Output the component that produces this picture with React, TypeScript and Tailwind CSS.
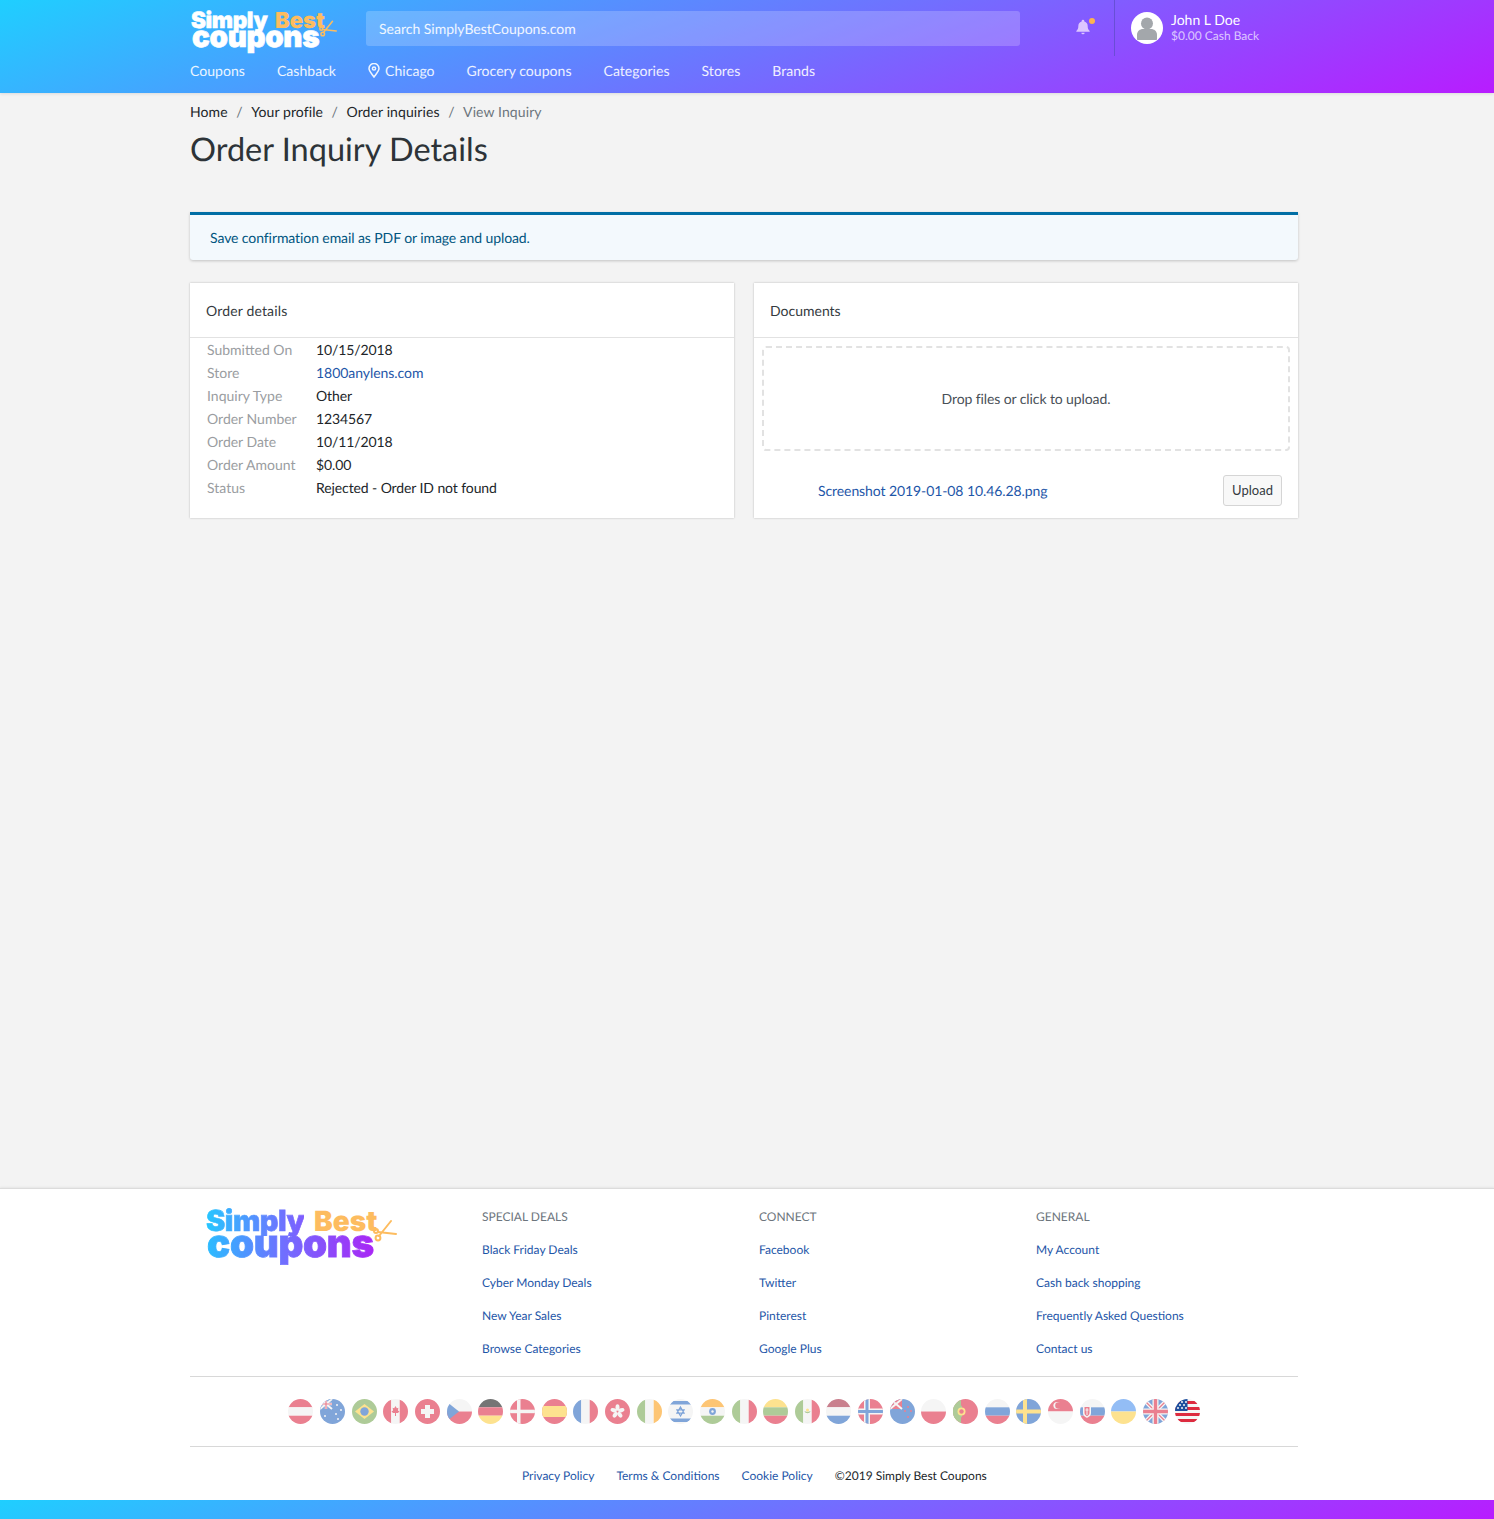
import React from "react";

const R = "#ea8090", W = "#f5f5f5", B = "#80a5d9", G = "#aecb98", Y = "#fde28f", O = "#fdc574", D = "#757575";
const r = (x: number, y: number, w: number, h: number, f: string, k?: number) => <rect key={k ?? `${x}${y}${w}${h}${f}`} x={x} y={y} width={w} height={h} fill={f} />;
const h3 = (a: string, b: string, c: string) => <>{r(0, 0, 25, 8.3, a)}{r(0, 8.3, 25, 8.4, b)}{r(0, 16.7, 25, 8.3, c)}</>;
const v3 = (a: string, b: string, c: string) => <>{r(0, 0, 8.3, 25, a)}{r(8.3, 0, 8.4, 25, b)}{r(16.7, 0, 8.3, 25, c)}</>;
const stars = (pts: number[][], f = W) => pts.map(([x, y], i) => <circle key={i} cx={x} cy={y} r="1" fill={f} />);
const ukCorner = <>{r(0, 0, 12, 10, B)}<path d="M0 0L12 10M12 0L0 10" stroke={W} strokeWidth="2" /><path d="M6 0V10M0 5H12" stroke={W} strokeWidth="2.4" /><path d="M6 0V10M0 5H12" stroke={R} strokeWidth="1.2" /></>;

const flags: React.ReactNode[] = [
  h3(R, W, R),
  <>{r(0, 0, 25, 25, B)}{ukCorner}{stars([[5, 17], [17, 6], [21, 11], [16, 15], [18, 20]])}</>,
  <>{r(0, 0, 25, 25, G)}<path d="M12.5 5L22 12.5L12.5 20L3 12.5Z" fill={Y} /><circle cx="12.5" cy="12.5" r="4.2" fill={B} /></>,
  <>{v3(R, W, R)}<path d="M12.5 7l1.3 2.3 1.6-.5-.5 3 1.6.2-1.4 2-2.1.1V17h-1v-2.9l-2.1-.1-1.4-2 1.6-.2-.5-3 1.6.5z" fill={R} /></>,
  <>{r(0, 0, 25, 25, R)}{r(10, 6, 5, 13, W)}{r(6, 10, 13, 5, W)}</>,
  <>{r(0, 0, 25, 12.5, W)}{r(0, 12.5, 25, 12.5, R)}<path d="M0 3L12 12.5L0 22Z" fill={B} /></>,
  h3(D, R, Y),
  <>{r(0, 0, 25, 25, R)}{r(7, 0, 3.5, 25, W)}{r(0, 10.7, 25, 3.5, W)}</>,
  <>{r(0, 0, 25, 25, R)}{r(0, 7, 25, 11, Y)}</>,
  v3(B, W, R),
  <>{r(0, 0, 25, 25, R)}<g fill={W}><ellipse cx="12.5" cy="8.5" rx="2" ry="3.2" /><ellipse cx="12.5" cy="8.5" rx="2" ry="3.2" transform="rotate(72 12.5 12.5)" /><ellipse cx="12.5" cy="8.5" rx="2" ry="3.2" transform="rotate(144 12.5 12.5)" /><ellipse cx="12.5" cy="8.5" rx="2" ry="3.2" transform="rotate(216 12.5 12.5)" /><ellipse cx="12.5" cy="8.5" rx="2" ry="3.2" transform="rotate(288 12.5 12.5)" /></g></>,
  v3(G, W, O),
  <>{r(0, 0, 25, 25, W)}{r(0, 2, 25, 3.5, B)}{r(0, 19.5, 25, 3.5, B)}<path d="M12.5 8l3.6 6.2H8.900zM12.5 17l-3.600-6.200h7.200z" fill="none" stroke={B} strokeWidth="1.200" /></>,
  <>{h3(O, W, G)}<circle cx="12.5" cy="12.5" r="3.400" fill={B} /><circle cx="12.5" cy="12.5" r="1.200" fill={W} /></>,
  v3(G, W, R),
  h3(Y, G, R),
  <>{v3(G, W, R)}<path d="M9.500 12c.5 3 5.500 3 6 0-1 1-5 1-6 0z" fill={G} /><circle cx="12.500" cy="11" r="1.500" fill={Y} /></>,
  h3("#c9808e", W, B),
  <>{r(0, 0, 25, 25, R)}{r(6, 0, 6, 25, W)}{r(0, 9.500, 25, 6, W)}{r(7.500, 0, 3, 25, B)}{r(0, 11, 25, 3, B)}</>,
  <>{r(0, 0, 25, 25, B)}{r(0, 0, 12, 10, R)}<path d="M0 0L12 10M12 0L0 10" stroke={W} strokeWidth="2" />{stars([[18, 8], [21, 12], [15, 12], [18, 18]], R)}</>,
  <>{r(0, 0, 25, 12.500, W)}{r(0, 12.500, 25, 12.500, R)}</>,
  <>{r(0, 0, 25, 25, R)}<path d="M0 3.500L9 7V18L0 21.500Z" fill={G} />{r(0, 0, 8, 25, G)}<circle cx="8.500" cy="12.500" r="4" fill={Y} /><circle cx="8.500" cy="12.500" r="2.200" fill={R} /></>,
  h3(W, B, R),
  <>{r(0, 0, 25, 25, B)}{r(7, 0, 4, 25, Y)}{r(0, 10.500, 25, 4, Y)}</>,
  <>{r(0, 0, 25, 12.500, R)}{r(0, 12.500, 25, 12.500, W)}<circle cx="9" cy="6.500" r="3.600" fill={W} /><circle cx="10.500" cy="6.500" r="3.300" fill={R} /></>,
  <>{h3(W, B, R)}<path d="M3 6h8v8c0 3-2.500 4-4 5-1.500-1-4-2-4-5z" fill={W} /><path d="M4.500 8h5v6c0 2-1.500 2.500-2.500 3.200-1-.7-2.500-1.200-2.500-3.200z" fill={R} /><path d="M7 9v7M5.500 11h3" stroke={W} strokeWidth="1" /></>,
  <>{r(0, 0, 25, 12.500, "#93bdf5")}{r(0, 12.500, 25, 12.500, Y)}</>,
  <>{r(0, 0, 25, 25, B)}<path d="M0 0L25 25M25 0L0 25" stroke={W} strokeWidth="4" /><path d="M0 0L25 25M25 0L0 25" stroke={R} strokeWidth="1.300" /><path d="M12.500 0V25M0 12.500H25" stroke={W} strokeWidth="6" /><path d="M12.500 0V25M0 12.500H25" stroke={R} strokeWidth="3.400" /></>,
  <>{r(0, 0, 25, 25, W)}{[2, 8, 14, 20].map((y) => r(0, y, 25, 3, "#dd2b3f", y))}{r(0, 0, 12.500, 12, "#1d4f9e")}{stars([[3, 3], [7, 3], [11, 3], [5, 6], [9, 6], [3, 9], [7, 9], [11, 9]])}</>,
];

function Logo({ footer }: { footer?: boolean }) {
  return (
    <div className={footer ? "relative w-[192px] h-[60px] font-['Inter',sans-serif] font-black select-none" : "relative w-[148px] h-[46px] font-['Inter',sans-serif] font-black select-none"}>
      {footer ? (
        <>
          <span className="absolute left-0 top-[1px] text-[29px] leading-[30px] tracking-[-0.5px] bg-[linear-gradient(90deg,#26c6ff,#5e86ff_60%,#7f5cff)] bg-clip-text text-transparent [-webkit-text-stroke:0.6px_transparent]">Simply</span>
          <span className="absolute left-[108px] top-[1px] text-[28px] leading-[30px] text-[#fdbc5f]">Best</span>
          <span className="absolute left-[1px] top-[18px] text-[38.500px] leading-[42px] tracking-[-0.3px] bg-[linear-gradient(90deg,#2bbcff,#6f70ff_45%,#a926f5)] bg-clip-text text-transparent [-webkit-text-stroke:0.8px_transparent]">coupons</span>
          <svg className="absolute left-[167px] top-[13px]" width="24" height="24" viewBox="0 0 24 24" fill="none" stroke="#fdbc5f" strokeWidth="2"><circle cx="5" cy="20" r="2.400" /><circle cx="3" cy="13" r="2" /><path d="M6 18L18 3M5 14L23 16" strokeLinecap="round" /></svg>
        </>
      ) : (
        <>
          <span className="absolute left-0 top-[1px] text-[22.500px] leading-[24px] tracking-[-0.4px] text-white [-webkit-text-stroke:0.5px_white]">Simply</span>
          <span className="absolute left-[84px] top-[1px] text-[22px] leading-[24px] text-[#fdbc5f]">Best</span>
          <span className="absolute left-[1px] top-[13px] text-[29.500px] leading-[32px] tracking-[-0.3px] text-white [-webkit-text-stroke:0.7px_white]">coupons</span>
          <svg className="absolute left-[128px] top-[11px]" width="18" height="18" viewBox="0 0 24 24" fill="none" stroke="#fdbc5f" strokeWidth="2"><circle cx="5" cy="20" r="2.400" /><circle cx="3" cy="13" r="2" /><path d="M6 18L18 3M5 14L23 16" strokeLinecap="round" /></svg>
        </>
      )}
    </div>
  );
}

const nav = ["Coupons", "Cashback", "Chicago", "Grocery coupons", "Categories", "Stores", "Brands"];
const rows: [string, string, boolean?][] = [
  ["Submitted On", "10/15/2018"],
  ["Store", "1800anylens.com", true],
  ["Inquiry Type", "Other"],
  ["Order Number", "1234567"],
  ["Order Date", "10/11/2018"],
  ["Order Amount", "$0.00"],
  ["Status", "Rejected - Order ID not found"],
];
const cols = [
  { t: "SPECIAL DEALS", l: ["Black Friday Deals", "Cyber Monday Deals", "New Year Sales", "Browse Categories"] },
  { t: "CONNECT", l: ["Facebook", "Twitter", "Pinterest", "Google Plus"] },
  { t: "GENERAL", l: ["My Account", "Cash back shopping", "Frequently Asked Questions", "Contact us"] },
];

export default function App() {
  return (
    <div className="min-h-[1519px] flex flex-col bg-[#f3f3f3] font-['Lato',sans-serif] text-[14px] text-[#212529] antialiased [text-rendering:geometricPrecision]">
      <header className="relative h-[93px] shrink-0 bg-[linear-gradient(160deg,#1fcfff,#b81cff)] shadow-[0_1px_3px_rgba(0,0,0,0.1)] text-white">
        <div className="w-[1108px] ml-[190px]">
          <div className="h-[56px] flex">
            <div className="w-[176px] pt-[8px] pl-[1px]"><Logo /></div>
            <div className="w-[654px] h-[35px] mt-[11px] rounded-[3px] bg-white/20 pl-[13px] flex items-center text-white/90">Search SimplyBestCoupons.com</div>
            <div className="w-[94px] flex justify-end pr-[23px]">
              <div className="relative mt-[19px] h-[16px]">
                <svg width="16" height="16" viewBox="0 0 24 24" fill="#dcc6ff"><path d="M12 1a2 2 0 0 0-2 2v.6A7 7 0 0 0 5 10.500c0 3.800-1 5.700-3 7.500v1h20v-1c-2-1.800-3-3.700-3-7.500a7 7 0 0 0-5-6.900V3a2 2 0 0 0-2-2zM9.500 20.500a2.500 2.500 0 0 0 5 0z" /></svg>
                <span className="absolute -right-[4px] -top-[1px] w-[6px] h-[6px] rounded-full bg-[#fdb44f]" />
              </div>
            </div>
            <div className="border-l border-[#5b4bc4]/70 pl-[16px] flex gap-[8px] items-start pt-[12px]">
              <div className="w-[32px] h-[32px] rounded-full bg-white flex items-center justify-center overflow-hidden">
                <svg width="22" height="24" viewBox="0 0 22 24" fill="#a3a7ab"><circle cx="11" cy="7.500" r="6" /><path d="M1 23v-4c0-4 3-6 6-6h8c3 0 6 2 6 6v4c0 .6-.4 1-1 1H2c-.6 0-1-.4-1-1z" /></svg>
              </div>
              <div className="-mt-[1px]">
                <div className="leading-[17px]">John L Doe</div>
                <div className="text-[12px] leading-[15px] text-white/70">$0.00 Cash Back</div>
              </div>
            </div>
          </div>
          <nav className="flex gap-[32px] h-[28px] items-center text-white/90 tracking-[0.04px]">
            {nav.map((n) => (
              <span key={n} className="flex items-center gap-[5px]">
                {n === "Chicago" && <svg width="12" height="15" viewBox="0 0 12 15" fill="none" stroke="currentColor" strokeWidth="1.500"><path d="M6 14C3.500 10.500 1 8 1 5.500a5 5 0 0 1 10 0C11 8 8.500 10.500 6 14z" /><circle cx="6" cy="5.500" r="1.600" /></svg>}
                {n}
              </span>
            ))}
          </nav>
        </div>
      </header>

      <main className="flex-1 w-[1108px] ml-[190px]">
        <div className="pt-[9px] flex h-[28px] items-center text-[#212529] tracking-[0.1px]">
          <span>Home</span><span className="px-[8.500px] text-[#6c757d]">/</span>
          <span>Your profile</span><span className="px-[8.500px] text-[#6c757d]">/</span>
          <span>Order inquiries</span><span className="px-[8.500px] text-[#6c757d]">/</span>
          <span className="text-[#6c757d]">View Inquiry</span>
        </div>
        <h1 className="text-[32.500px] leading-[41px] mt-[7px] text-[#2d3338] font-normal">Order Inquiry Details</h1>
        <div className="mt-[43px] h-[48px] border-t-[3px] border-[#006ea5] bg-[#f3f9fd] rounded-b-[3px] shadow-[0_1px_3px_rgba(0,0,0,0.2)] pl-[20px] flex items-center text-[#00557f] tracking-[-0.09px]">
          Save confirmation email as PDF or image and upload.
        </div>
        <div className="mt-[23px] grid grid-cols-2 gap-[20px]">
          <section className="h-[235px] bg-white shadow-[0_0_2px_rgba(0,0,0,0.25)]">
            <div className="h-[55px] border-b border-[#e2e2e2] pl-[16px] flex items-center text-[#343a40] tracking-[0.15px]">Order details</div>
            <div>
              {rows.map(([k, v, link]) => (
                <div key={k} className="flex h-[23px] items-center">
                  <span className="w-[126px] pl-[17px] text-[#9a9da1]">{k}</span>
                  <span className={link ? "text-[#1e56a8] tracking-[-0.05px]" : "text-[#212529] tracking-[-0.1px]"}>{v}</span>
                </div>
              ))}
            </div>
          </section>
          <section className="h-[235px] bg-white shadow-[0_0_2px_rgba(0,0,0,0.25)]">
            <div className="h-[55px] border-b border-[#e2e2e2] pl-[16px] flex items-center text-[#343a40]">Documents</div>
            <div className="mx-[8px] mt-[8px] h-[105px] border-2 border-dashed border-[#e2e2e2] rounded-[4px] flex items-center justify-center text-[#495057] tracking-[-0.1px]">Drop files or click to upload.</div>
            <div className="mt-[24px] pl-[64px] pr-[16px] flex items-center justify-between">
              <span className="text-[#1e56a8] tracking-[-0.09px]">Screenshot 2019-01-08 10.46.28.png</span>
              <button className="w-[59px] h-[31px] rounded-[3px] border border-[#d5d5d5] bg-[#f8f8f8] text-[13px] text-[#343a40]">Upload</button>
            </div>
          </section>
        </div>
      </main>

      <footer className="shrink-0 bg-white border-t border-[#dcdcdc] shadow-[0_-1px_2px_rgba(0,0,0,0.06)]">
        <div className="w-[1108px] ml-[190px]">
          <div className="h-[188px] border-b border-[#d8d8d8] grid grid-cols-4">
            <div className="pl-[16px] pt-[16px]"><Logo footer /></div>
            {cols.map((c) => (
              <div key={c.t} className="pl-[15px] pt-[19px] text-[12px]">
                <div className="h-[17px] leading-[17px] text-[#6c757d]">{c.t}</div>
                {c.l.map((l) => <div key={l} className="mt-[16px] h-[17px] leading-[17px] text-[#1e56a8]">{l}</div>)}
              </div>
            ))}
          </div>
          <div className="h-[70px] border-b border-[#d8d8d8] flex items-center justify-center">
            {flags.map((f, i) => (
              <svg key={i} width="25" height="25" viewBox="0 0 25 25" className="mx-[3.340px] rounded-full shrink-0">{f}</svg>
            ))}
          </div>
          <div className="h-[53px] pl-[332px] flex items-center gap-[22px] text-[12px] text-[#1e56a8] pt-[5px]">
            <span>Privacy Policy</span><span>Terms &amp; Conditions</span><span>Cookie Policy</span><span className="text-[#212529]">©2019 Simply Best Coupons</span>
          </div>
        </div>
        <div className="h-[19px] bg-[linear-gradient(160deg,#1fcfff,#b81cff)]" />
      </footer>
    </div>
  );
}
